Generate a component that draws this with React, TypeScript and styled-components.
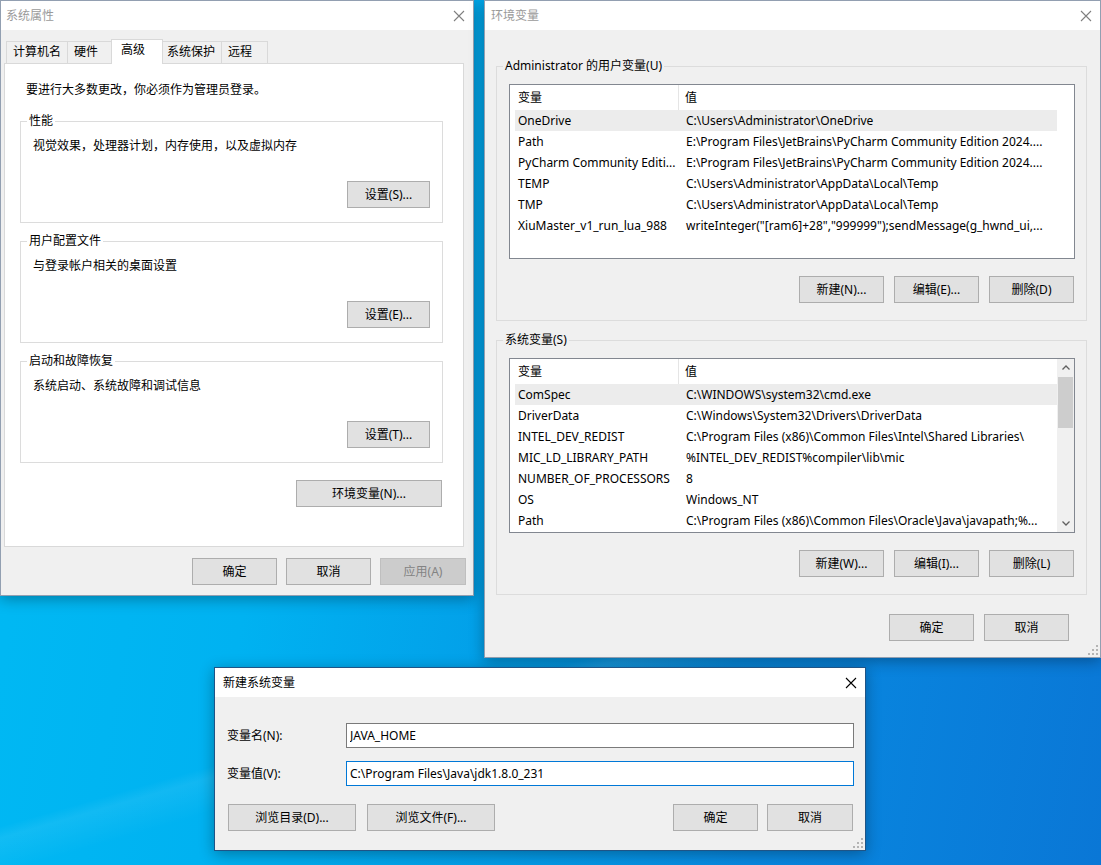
import React from "react";
import styled, { createGlobalStyle } from "styled-components";

const GlobalStyle = createGlobalStyle`
  html, body { margin: 0; padding: 0; }
  body {
    width: 1101px;
    height: 865px;
    overflow: hidden;
    font-family: "Noto Sans", "Noto Sans CJK SC", sans-serif;
    font-size: 12px;
    line-height: 16px;
    color: #000;
  }
  * { box-sizing: border-box; }
`;

const Desktop = styled.div`
  position: relative;
  width: 1101px;
  height: 865px;
  overflow: hidden;
  background:
    linear-gradient(164deg, transparent 70%, rgba(255, 255, 255, 0.07) 71%, transparent 74%),
    linear-gradient(100deg, #00bbf4 0%, #00b2f1 28%, #039ce7 52%, #0888e0 72%, #0a77d6 100%);
`;

const Win = styled.div<{ $left: number; $top: number; $w: number; $h: number; $active?: boolean }>`
  position: absolute;
  left: ${(p) => p.$left}px;
  top: ${(p) => p.$top}px;
  width: ${(p) => p.$w}px;
  height: ${(p) => p.$h}px;
  display: flex;
  flex-direction: column;
  background: #f0f0f0;
  border: 1px solid ${(p) => (p.$active ? "#1f5486" : "rgba(30, 60, 100, 0.45)")};
  box-shadow: 0 3px 14px rgba(0, 0, 0, 0.32);
`;

const TitleBar = styled.div<{ $active?: boolean; $pl: number }>`
  flex: none;
  height: 29px;
  background: #fff;
  display: flex;
  align-items: center;
  justify-content: space-between;
  padding: 0 8px 0 ${(p) => p.$pl}px;
  color: ${(p) => (p.$active ? "#000" : "#9a9a9a")};
`;

const CloseBox = styled.div`
  width: 12px;
  height: 12px;
  display: flex;
  align-items: center;
  justify-content: center;
`;

const CloseX = ({ color }: { color: string }) => (
  <CloseBox>
    <svg width="12" height="12" viewBox="0 0 12 12">
      <path d="M1 1 L11 11 M11 1 L1 11" stroke={color} strokeWidth="1.1" fill="none" />
    </svg>
  </CloseBox>
);

const Grip = styled.div`
  position: absolute;
  right: 2px;
  bottom: 2px;
  width: 10px;
  height: 10px;
  display: flex;
`;

const ResizeGrip = () => (
  <Grip>
    <svg width="10" height="10" viewBox="0 0 10 10">
      <g fill="#b4b4b4">
        <rect x="8" y="0" width="2" height="2" />
        <rect x="4" y="4" width="2" height="2" />
        <rect x="8" y="4" width="2" height="2" />
        <rect x="0" y="8" width="2" height="2" />
        <rect x="4" y="8" width="2" height="2" />
        <rect x="8" y="8" width="2" height="2" />
      </g>
    </svg>
  </Grip>
);

const Btn = styled.button<{ $w?: number }>`
  flex: none;
  width: ${(p) => p.$w ?? 85}px;
  height: 27px;
  padding: 0;
  border: 1px solid #adadad;
  background: #e1e1e1;
  font: inherit;
  color: #000;
  &:disabled {
    background: #cccccc;
    border-color: #bfbfbf;
    color: #838383;
  }
`;

const ButtonRow = styled.div<{ $mt: number; $gap: number; $mr?: number }>`
  display: flex;
  justify-content: flex-end;
  gap: ${(p) => p.$gap}px;
  margin-top: ${(p) => p.$mt}px;
  margin-right: ${(p) => p.$mr ?? 0}px;
`;

/* ---------- Window 1: 系统属性 ---------- */

const SysBody = styled.div`
  flex: 1;
  display: flex;
  flex-direction: column;
  padding: 9px 9px 0 3px;
`;

const TabStrip = styled.div`
  display: flex;
  align-items: flex-end;
  height: 24px;
  padding-left: 3px;
`;

const Tab = styled.div<{ $selected?: boolean }>`
  height: ${(p) => (p.$selected ? 25 : 22)}px;
  min-width: ${(p) => (p.$selected ? 52 : 47)}px;
  padding: 2px 6px 0 6px;
  margin-left: -1px;
  border: 1px solid #d9d9d9;
  border-bottom: none;
  background: ${(p) => (p.$selected ? "#fff" : "#f0f0f0")};
  white-space: nowrap;
  ${(p) =>
    p.$selected &&
    `
    position: relative;
    z-index: 1;
    margin: 0 -2px -1px -3px;
    padding-left: 9px;
  `}
`;

const TabPanel = styled.div`
  height: 484px;
  background: #fff;
  border: 1px solid #d9d9d9;
  padding: 18px 20px 0 15px;
  display: flex;
  flex-direction: column;
`;

const Intro = styled.div`
  margin-left: 6px;
`;

const Group = styled.fieldset<{ $mt: number }>`
  margin: ${(p) => p.$mt}px 0 0 0;
  padding: 0;
  min-width: 0;
  border: 1px solid #dcdcdc;
`;

const Legend = styled.legend`
  margin-left: 6px;
  padding: 0 2px;
  line-height: 16px;
`;

const GroupBody = styled.div`
  display: flex;
  flex-direction: column;
  padding: 9px 12px 14px 12px;
`;

/* ---------- Window 2: 环境变量 ---------- */

const EnvBody = styled.div`
  flex: 1;
  display: flex;
  flex-direction: column;
  padding: 28px 13px 0 11px;
`;

const EnvGroupBody = styled.div`
  display: flex;
  flex-direction: column;
  padding: 10px 11px 17px 12px;
`;

const ListView = styled.div`
  height: 175px;
  border: 1px solid #828790;
  background: #fff;
  display: flex;
  overflow: hidden;
`;

const ListMain = styled.div`
  flex: none;
  width: 547px;
  padding-left: 5px;
  display: flex;
  flex-direction: column;
`;

const HeaderRow = styled.div`
  flex: none;
  height: 25px;
  display: grid;
  grid-template-columns: 164px 378px;
`;

const HeaderCell = styled.div<{ $first?: boolean }>`
  display: flex;
  align-items: center;
  padding-left: ${(p) => (p.$first ? 3 : 6)}px;
  border-right: ${(p) => (p.$first ? "1px solid #e5e5e5" : "none")};
`;

const Row = styled.div<{ $sel?: boolean }>`
  flex: none;
  height: 21px;
  display: grid;
  grid-template-columns: 164px 378px;
  background: ${(p) => (p.$sel ? "#ececec" : "transparent")};
`;

const Cell = styled.div<{ $first?: boolean }>`
  display: flex;
  align-items: center;
  padding-left: ${(p) => (p.$first ? 3 : 7)}px;
  white-space: nowrap;
  overflow: hidden;
`;

const ScrollTrack = styled.div<{ $show?: boolean }>`
  flex: none;
  width: 17px;
  display: flex;
  flex-direction: column;
  background: ${(p) => (p.$show ? "#f0f0f0" : "#fff")};
`;

const ScrollArrow = styled.div`
  flex: none;
  height: 17px;
  display: flex;
  align-items: center;
  justify-content: center;
`;

const ScrollThumb = styled.div`
  flex: none;
  height: 51px;
  margin: 1px 1px 0 1px;
  background: #cdcdcd;
`;

const ScrollFill = styled.div`
  flex: 1;
`;

const Chevron = ({ up }: { up?: boolean }) => (
  <svg width="8" height="5" viewBox="0 0 8 5">
    <path
      d={up ? "M0.5 4.5 L4 1 L7.5 4.5" : "M0.5 0.5 L4 4 L7.5 0.5"}
      stroke="#606060"
      strokeWidth="1.3"
      fill="none"
    />
  </svg>
);

type Pair = [string, string];

const userVars: Pair[] = [
  ["OneDrive", "C:\\Users\\Administrator\\OneDrive"],
  ["Path", "E:\\Program Files\\JetBrains\\PyCharm Community Edition 2024...."],
  ["PyCharm Community Editi...", "E:\\Program Files\\JetBrains\\PyCharm Community Edition 2024...."],
  ["TEMP", "C:\\Users\\Administrator\\AppData\\Local\\Temp"],
  ["TMP", "C:\\Users\\Administrator\\AppData\\Local\\Temp"],
  ["XiuMaster_v1_run_lua_988", "writeInteger(\"[ram6]+28\",\"999999\");sendMessage(g_hwnd_ui,..."],
];

const sysVars: Pair[] = [
  ["ComSpec", "C:\\WINDOWS\\system32\\cmd.exe"],
  ["DriverData", "C:\\Windows\\System32\\Drivers\\DriverData"],
  ["INTEL_DEV_REDIST", "C:\\Program Files (x86)\\Common Files\\Intel\\Shared Libraries\\"],
  ["MIC_LD_LIBRARY_PATH", "%INTEL_DEV_REDIST%compiler\\lib\\mic"],
  ["NUMBER_OF_PROCESSORS", "8"],
  ["OS", "Windows_NT"],
  ["Path", "C:\\Program Files (x86)\\Common Files\\Oracle\\Java\\javapath;%..."],
];

const VarList = ({ rows, scroll }: { rows: Pair[]; scroll?: boolean }) => (
  <ListView>
    <ListMain>
      <HeaderRow>
        <HeaderCell $first>变量</HeaderCell>
        <HeaderCell>值</HeaderCell>
      </HeaderRow>
      {rows.map(([k, v], i) => (
        <Row key={k + i} $sel={i === 0}>
          <Cell $first>{k}</Cell>
          <Cell>{v}</Cell>
        </Row>
      ))}
    </ListMain>
    <ScrollTrack $show={scroll}>
      {scroll && (
        <>
          <ScrollArrow>
            <Chevron up />
          </ScrollArrow>
          <ScrollThumb />
          <ScrollFill />
          <ScrollArrow>
            <Chevron />
          </ScrollArrow>
        </>
      )}
    </ScrollTrack>
  </ListView>
);

/* ---------- Window 3: 新建系统变量 ---------- */

const NewBody = styled.div`
  flex: 1;
  display: flex;
  flex-direction: column;
  padding: 26px 11px 0 12px;
`;

const FormRow = styled.div<{ $mt: number }>`
  display: grid;
  grid-template-columns: 119px 1fr;
  align-items: center;
  height: 25px;
  margin-top: ${(p) => p.$mt}px;
`;

const TextInput = styled.input<{ $focus?: boolean }>`
  height: 25px;
  width: 100%;
  padding: 0 3px;
  border: 1px solid ${(p) => (p.$focus ? "#0078d7" : "#7a7a7a")};
  background: #fff;
  font: inherit;
  color: #000;
  outline: none;
`;

const DialogButtons = styled.div`
  display: flex;
  justify-content: space-between;
  margin-top: 18px;
  padding: 0 1px;
`;

const BtnGroup = styled.div<{ $gap: number }>`
  display: flex;
  gap: ${(p) => p.$gap}px;
`;

export default function App() {
  return (
    <>
      <GlobalStyle />
      <Desktop>
        {/* 系统属性 */}
        <Win $left={0} $top={0} $w={474} $h={596}>
          <TitleBar $pl={5}>
            <span>系统属性</span>
            <CloseX color="#7f7f7f" />
          </TitleBar>
          <SysBody>
            <TabStrip>
              <Tab>计算机名</Tab>
              <Tab>硬件</Tab>
              <Tab $selected>高级</Tab>
              <Tab>系统保护</Tab>
              <Tab>远程</Tab>
            </TabStrip>
            <TabPanel>
              <Intro>要进行大多数更改，你必须作为管理员登录。</Intro>
              <Group $mt={15}>
                <Legend>性能</Legend>
                <GroupBody>
                  <div>视觉效果，处理器计划，内存使用，以及虚拟内存</div>
                  <ButtonRow $mt={27} $gap={0}>
                    <Btn $w={83}>设置(S)...</Btn>
                  </ButtonRow>
                </GroupBody>
              </Group>
              <Group $mt={10}>
                <Legend>用户配置文件</Legend>
                <GroupBody>
                  <div>与登录帐户相关的桌面设置</div>
                  <ButtonRow $mt={27} $gap={0}>
                    <Btn $w={83}>设置(E)...</Btn>
                  </ButtonRow>
                </GroupBody>
              </Group>
              <Group $mt={10}>
                <Legend>启动和故障恢复</Legend>
                <GroupBody>
                  <div>系统启动、系统故障和调试信息</div>
                  <ButtonRow $mt={27} $gap={0}>
                    <Btn $w={83}>设置(T)...</Btn>
                  </ButtonRow>
                </GroupBody>
              </Group>
              <ButtonRow $mt={17} $gap={0} $mr={1}>
                <Btn $w={146}>环境变量(N)...</Btn>
              </ButtonRow>
            </TabPanel>
            <ButtonRow $mt={11} $gap={9} $mr={-2}>
              <Btn>确定</Btn>
              <Btn>取消</Btn>
              <Btn $w={86} disabled>
                应用(A)
              </Btn>
            </ButtonRow>
          </SysBody>
        </Win>

        {/* 环境变量 */}
        <Win $left={484} $top={0} $w={617} $h={658}>
          <TitleBar $pl={6}>
            <span>环境变量</span>
            <CloseX color="#7f7f7f" />
          </TitleBar>
          <EnvBody>
            <Group $mt={0}>
              <Legend>Administrator 的用户变量(U)</Legend>
              <EnvGroupBody>
                <VarList rows={userVars} />
                <ButtonRow $mt={17} $gap={10} $mr={1}>
                  <Btn>新建(N)...</Btn>
                  <Btn>编辑(E)...</Btn>
                  <Btn>删除(D)</Btn>
                </ButtonRow>
              </EnvGroupBody>
            </Group>
            <Group $mt={11}>
              <Legend>系统变量(S)</Legend>
              <EnvGroupBody>
                <VarList rows={sysVars} scroll />
                <ButtonRow $mt={17} $gap={10} $mr={1}>
                  <Btn>新建(W)...</Btn>
                  <Btn>编辑(I)...</Btn>
                  <Btn>删除(L)</Btn>
                </ButtonRow>
              </EnvGroupBody>
            </Group>
            <ButtonRow $mt={19} $gap={10} $mr={18}>
              <Btn>确定</Btn>
              <Btn>取消</Btn>
            </ButtonRow>
          </EnvBody>
          <ResizeGrip />
        </Win>

        {/* 新建系统变量 */}
        <Win $left={214} $top={667} $w={652} $h={184} $active>
          <TitleBar $pl={8} $active>
            <span>新建系统变量</span>
            <CloseX color="#000" />
          </TitleBar>
          <NewBody>
            <FormRow $mt={0}>
              <span>变量名(N):</span>
              <TextInput defaultValue="JAVA_HOME" readOnly />
            </FormRow>
            <FormRow $mt={13}>
              <span>变量值(V):</span>
              <TextInput $focus defaultValue="C:\Program Files\Java\jdk1.8.0_231" readOnly />
            </FormRow>
            <DialogButtons>
              <BtnGroup $gap={11}>
                <Btn $w={128}>浏览目录(D)...</Btn>
                <Btn $w={128}>浏览文件(F)...</Btn>
              </BtnGroup>
              <BtnGroup $gap={9}>
                <Btn>确定</Btn>
                <Btn $w={86}>取消</Btn>
              </BtnGroup>
            </DialogButtons>
          </NewBody>
          <ResizeGrip />
        </Win>
      </Desktop>
    </>
  );
}
